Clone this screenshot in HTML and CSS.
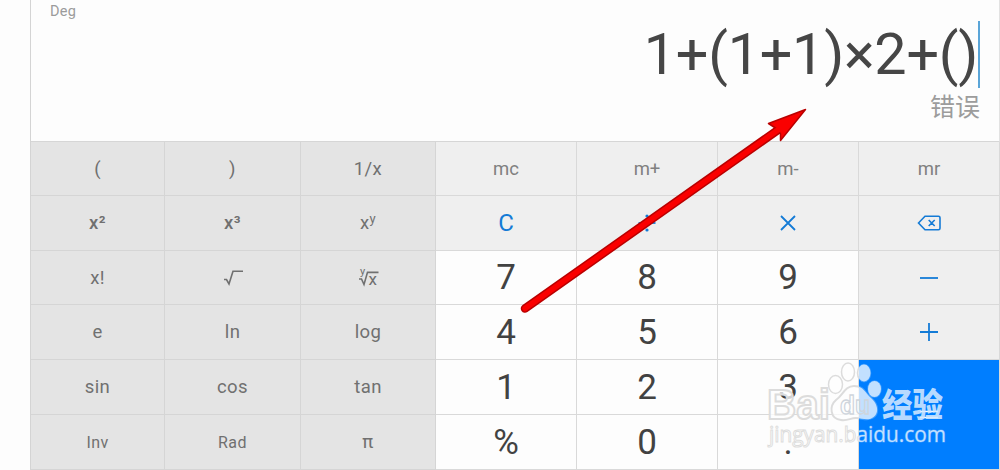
FILE: index.html
```html
<!DOCTYPE html>
<html lang="zh">
<head>
<meta charset="utf-8">
<title>Calculator</title>
<link rel="stylesheet" href="styles.css">
</head>
<body>
<main class="calculator">
  <section class="display">
    <div class="mode">Deg</div>
    <div class="readout">
      <div class="expression"><span class="formula">1+(1+1)×2+()</span><span class="caret"></span></div>
      <div class="result">错误</div>
    </div>
  </section>
  <section class="keys">
    <div class="key fn">(</div><div class="key fn">)</div><div class="key fn">1/x</div>
    <div class="key mem">mc</div><div class="key mem">m+</div><div class="key mem">m-</div><div class="key mem">mr</div>

    <div class="key fn bold">x²</div><div class="key fn bold">x³</div><div class="key fn"><span>x<sup class="power">y</sup></span></div>
    <div class="key op clear">C</div>
    <div class="key op"><svg width="20" height="20" viewBox="0 0 20 20"><path d="M1.500 10h17"/><circle cx="10" cy="3" r="1.600"/><circle cx="10" cy="17" r="1.600"/></svg></div>
    <div class="key op"><svg width="20" height="20" viewBox="0 0 20 20"><path d="M3 3l14 14M17 3L3 17"/></svg></div>
    <div class="key op"><svg width="26" height="20" viewBox="0 0 26 20"><path class="thin" d="M2.500 10L9 3.300H22.500Q24 3.300 24 4.800V15.200Q24 16.700 22.500 16.700H9ZM12.700 7l6 6M18.700 7l-6 6"/></svg></div>

    <div class="key fn">x!</div>
    <div class="key fn"><svg class="root" width="22" height="18" viewBox="0 0 22 18"><path d="M2 10.500h2.500L7 15 11 2.300h10"/></svg></div>
    <div class="key fn"><svg class="root" width="22" height="26" viewBox="0 -3 22 26"><path d="M2 11h2.500L7 16.500 10.500 4.400H21.500"/><text class="index" x="3" y="7">y</text><text class="radicand" x="11.500" y="16.500">x</text></svg></div>
    <div class="key num">7</div><div class="key num">8</div><div class="key num">9</div>
    <div class="key op"><svg width="20" height="20" viewBox="0 0 20 20"><path d="M1 10h18"/></svg></div>

    <div class="key fn">e</div><div class="key fn">ln</div><div class="key fn">log</div>
    <div class="key num">4</div><div class="key num">5</div><div class="key num">6</div>
    <div class="key op"><svg width="20" height="20" viewBox="0 0 20 20"><path d="M1 10h18M10 1v18"/></svg></div>

    <div class="key fn">sin</div><div class="key fn">cos</div><div class="key fn">tan</div>
    <div class="key num">1</div><div class="key num">2</div><div class="key num">3</div>
    <div class="key equals"><svg width="20" height="12" viewBox="0 0 20 12"><path d="M1 2.500h18M1 8.500h18"/></svg></div>

    <div class="key fn small">Inv</div><div class="key fn small">Rad</div><div class="key fn">π</div>
    <div class="key num">%</div><div class="key num">0</div><div class="key num">.</div>
  </section>
</main>
<svg class="overlay" width="1000" height="470" viewBox="0 0 1000 470">
  <defs>
    <linearGradient id="fill" gradientUnits="userSpaceOnUse" x1="760" x2="958" y1="0" y2="0">
      <stop offset="0.500" stop-color="#fff" stop-opacity="0.750"/>
      <stop offset="0.500" stop-color="#c2e0ff"/>
    </linearGradient>
    <linearGradient id="edge" gradientUnits="userSpaceOnUse" x1="760" x2="958" y1="0" y2="0">
      <stop offset="0.500" stop-color="#dcdcdc"/>
      <stop offset="0.500" stop-color="#c2e0ff" stop-opacity="0.300"/>
    </linearGradient>
  </defs>
  <g class="mark">
    <ellipse cx="835.500" cy="384.500" rx="7" ry="9"/>
    <ellipse cx="848" cy="372" rx="6.500" ry="9"/>
    <ellipse cx="864" cy="373" rx="6.500" ry="8.500"/>
    <ellipse cx="874.500" cy="389" rx="6.500" ry="8"/>
    <path d="M854 386C845 386 843 395 836 400C829 406 830 419 841 420C848 421 850 418 856 418C862 418 867 421 872 418C880 414 878 404 871 398C865 393 864 386 854 386Z"/>
    <text class="brand" x="767" y="418.500" textLength="63" lengthAdjust="spacingAndGlyphs">Bai</text>
    <text class="url" x="769" y="442" textLength="177" lengthAdjust="spacingAndGlyphs">jingyan.baidu.com</text>
  </g>
  <text class="du" x="840" y="414" textLength="30" lengthAdjust="spacingAndGlyphs">du</text>
  <text class="cn" x="882" y="417" textLength="61" lengthAdjust="spacingAndGlyphs">经验</text>
  <path class="shaft" d="M525 308.500L785 125"/>
  <path class="head" d="M805.500 109.500L768.500 123.500L777 129L780.500 134L780.500 140.500Z"/>
  <path class="shaft-core" d="M525 308.500L785 125"/>
</svg>
</body>
</html>
```

FILE: styles.css
```css
* { box-sizing: border-box; }
body {
  margin: 0;
  background: #fdfdfd;
  font-family: Roboto, "Noto Sans CJK SC", sans-serif;
  overflow: hidden;
}
.calculator {
  margin-left: 30px;
  width: 970px;
  height: 470px;
  border-left: 1px solid #d4d4d4;
  display: flex;
  flex-direction: column;
}
.display {
  height: 142px;
  border-bottom: 1px solid #d6d6d6;
  border-right: 1px solid #e2e2e2;
  display: flex;
  justify-content: space-between;
  padding-left: 19px;
}
.mode {
  padding-top: 3px;
  font-size: 14.500px;
  line-height: 18px;
  color: #9b9b9b;
  letter-spacing: .3px;
}
.readout {
  display: flex;
  flex-direction: column;
  align-items: flex-end;
  padding: 21px 19px 0 0;
}
.expression {
  display: flex;
  height: 67px;
  line-height: 67px;
  font-size: 57.500px;
  letter-spacing: -.25px;
  color: #464646;
}
.caret { width: 2px; height: 67px; background: #5aa5d8; }
.result {
  font-size: 25px;
  line-height: 38px;
  color: #9c9c9c;
  margin-top: 1px;
}
.keys {
  display: grid;
  grid-template-columns: 134px 136px 135px repeat(4, 141px);
  grid-template-rows: 54px 55px 54px 55px 55px 55px;
}
.key {
  display: flex;
  align-items: center;
  justify-content: center;
  border-right: 1px solid #d9d9d9;
  border-bottom: 1px solid #d9d9d9;
}
.fn {
  background: #e4e4e4;
  color: #707070;
  border-color: #d5d5d5;
  font-size: 18.500px;
  letter-spacing: .4px;
}
.bold { font-weight: 500; }
.small { font-size: 16px; }
.power { font-size: 13px; line-height: 0; vertical-align: 6px; }
.mem { background: #efefef; color: #808080; font-size: 18.500px; }
.op { background: #efefef; color: #147bd6; }
.clear { font-size: 24px; }
.op svg { fill: none; stroke: #147bd6; stroke-width: 1.800; }
.op circle { fill: #147bd6; stroke: none; }
.op .thin { stroke-width: 1.600; }
.root { fill: none; stroke: #707070; stroke-width: 1.600; }
.root text { fill: #707070; stroke: none; letter-spacing: 0; }
.index { font-size: 11px; }
.radicand { font-size: 17px; }
.num { background: #fdfdfd; color: #424242; font-size: 35px; }
.equals { grid-row: span 2; background: #007eff; }
.equals svg { fill: none; stroke: #fff; stroke-width: 1.600; }
.overlay { position: absolute; left: 0; top: 0; }
.mark { fill: url(#fill); stroke: url(#edge); stroke-width: 1.500; }
.mark path, .brand { stroke-width: 2; }
.brand { font: bold 42px "Liberation Sans", sans-serif; }
.url { font: 22px "Open Sans", sans-serif; stroke-width: 1; }
.du { font: bold 26px "Liberation Sans", sans-serif; fill: none; stroke: #cfd5dc; stroke-width: 1.300; }
.cn { font: 900 33px "Noto Sans CJK SC", sans-serif; fill: rgba(210, 232, 255, .88); }
.shaft { stroke: #b90000; stroke-width: 8.500; stroke-linecap: round; }
.shaft-core { stroke: #fa0000; stroke-width: 5.500; stroke-linecap: round; }
.head { fill: #fa0000; stroke: #b90000; stroke-width: 1.500; stroke-linejoin: round; }
```
